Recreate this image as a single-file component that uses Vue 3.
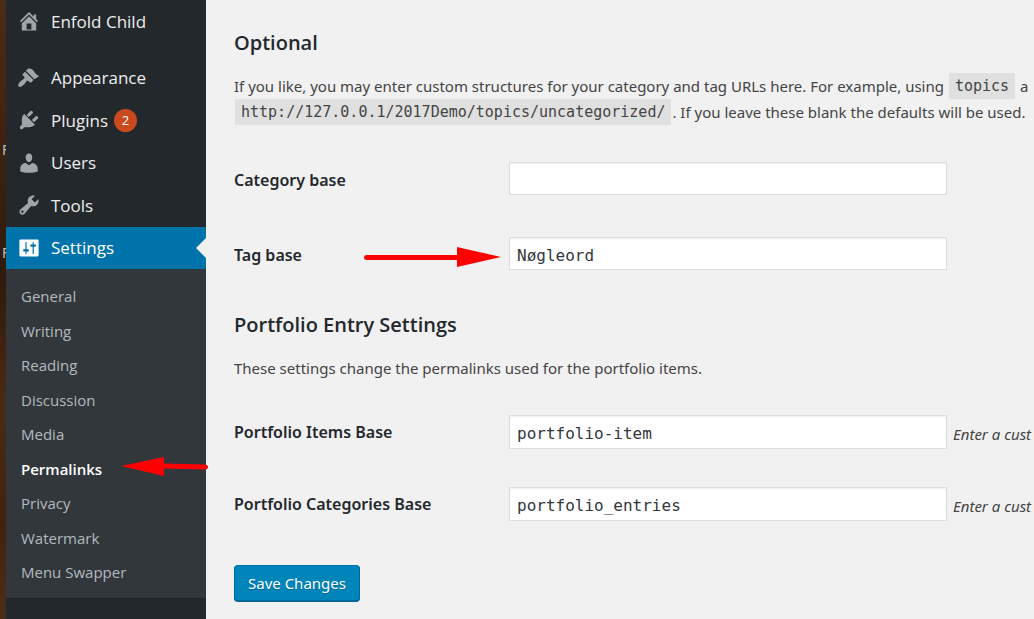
<script setup>
import { reactive } from 'vue'

const menu = [
  {
    label: 'Enfold Child',
    icon: 'M16 8.5l1.53 1.53-1.06 1.06L10 4.6l-6.47 6.47-1.06-1.06L10 2.5l4 4v-2h2v4zm-6-2.46l6 5.99V18H4v-5.97zM12 17v-5H8v5h4z',
  },
  {
    label: 'Appearance',
    spaced: true,
    icon: 'M14.48 11.06L7.41 3.99l1.5-1.5c.5-.56 2.3-.47 3.51.32 1.21.8 1.43 1.28 2 2.1.61.88 1.4 2.16 4.05 3.32l-.99.99zm-.71.71L6.7 4.7 4.93 6.47c-.39.39-.39 1.02 0 1.41l1.06 1.06c.39.39.39 1.03 0 1.42-.6.6-1.43 1.11-2.21 1.69-.35.26-.7.53-1.01.84C1.43 14.23.4 16.08 1.4 17.07c.99 1 2.84-.03 4.18-1.36.31-.31.58-.66.85-1.02.57-.78 1.08-1.61 1.69-2.21.39-.39 1.02-.39 1.41 0l1.06 1.06c.39.39 1.02.39 1.41 0z',
  },
  {
    label: 'Plugins',
    badge: 2,
    icon: 'M13.11 4.36L9.87 7.6 8 5.73l3.24-3.24c.35-.34 1.05-.2 1.56.32.52.51.66 1.21.31 1.55zm-8 1.77l.91-1.12 9.01 9.01-1.19.84c-.71.71-2.63 1.16-3.82 1.16H6.14L4.9 17.26c-.59.59-1.54.59-2.12 0-.59-.58-.59-1.53 0-2.12l1.24-1.24v-3.88c0-1.13.4-3.19 1.09-3.89zm7.26 3.97l3.24-3.24c.34-.35 1.04-.21 1.55.31.52.51.66 1.21.31 1.55l-3.24 3.25z',
  },
  {
    label: 'Users',
    icon: 'M10 9.25c-2.27 0-2.73-3.44-2.73-3.44C7 4.02 7.82 2 9.97 2c2.16 0 2.98 2.02 2.71 3.81 0 0-.41 3.44-2.68 3.44zm0 2.57L12.72 10c2.39 0 4.52 2.33 4.52 4.53v2.49s-3.65 1.13-7.24 1.13c-3.65 0-7.24-1.13-7.24-1.13v-2.49c0-2.25 1.94-4.48 4.47-4.48z',
  },
  {
    label: 'Tools',
    icon: 'M16.68 9.77c-1.34 1.34-3.3 1.67-4.95.99l-5.41 6.52c-.99.99-2.59.99-3.58 0s-.99-2.59 0-3.57l6.52-5.42c-.68-1.65-.35-3.61.99-4.95 1.28-1.28 3.12-1.62 4.72-1.06l-2.89 2.89 2.82 2.82 2.86-2.87c.53 1.58.18 3.39-1.08 4.65zM3.81 16.21c.4.39 1.04.39 1.43 0 .4-.4.4-1.04 0-1.43-.39-.4-1.03-.4-1.43 0-.39.39-.39 1.03 0 1.43z',
  },
  {
    label: 'Settings',
    current: true,
    icon: 'M18 16V4c0-.55-.45-1-1-1H3c-.55 0-1 .45-1 1v12c0 .55.45 1 1 1h14c.55 0 1-.45 1-1zM8 11h1c.55 0 1 .45 1 1s-.45 1-1 1H8v1.5c0 .28-.22.5-.5.5s-.5-.22-.5-.5V13H6c-.55 0-1-.45-1-1s.45-1 1-1h1V5.5c0-.28.22-.5.5-.5s.5.22.5.5V11zm5-2h-1c-.55 0-1-.45-1-1s.45-1 1-1h1V5.5c0-.28.22-.5.5-.5s.5.22.5.5V7h1c.55 0 1 .45 1 1s-.45 1-1 1h-1v5.5c0 .28-.22.5-.5.5s-.5-.22-.5-.5V9z',
  },
]

const submenu = ['General', 'Writing', 'Reading', 'Discussion', 'Media', 'Permalinks', 'Privacy', 'Watermark', 'Menu Swapper']

const form = reactive({
  category: '',
  tag: 'Nøgleord',
  items: 'portfolio-item',
  entries: 'portfolio_entries',
})
</script>

<template>
  <div class="page">
    <div class="desktop" aria-hidden="true">
      <span class="shortcut">F</span>
      <span class="shortcut">F</span>
    </div>

    <nav class="sidebar">
      <ul class="menu">
        <li v-for="item in menu" :key="item.label" :class="{ spaced: item.spaced }">
          <a href="#" class="menu-link" :class="{ current: item.current }">
            <svg class="icon" viewBox="0 0 20 20" aria-hidden="true"><path :d="item.icon" /></svg>
            <span>{{ item.label }}</span>
            <span v-if="item.badge" class="badge">{{ item.badge }}</span>
          </a>
        </li>
      </ul>
      <ul class="submenu">
        <li v-for="name in submenu" :key="name">
          <a href="#" class="sub-link" :class="{ active: name === 'Permalinks' }">{{ name }}</a>
        </li>
      </ul>
      <svg class="arrow arrow-left" viewBox="0 0 88 20" aria-hidden="true">
        <path d="M0 9L43 0V6.500L84 7.500Q87 8 87 10T84 12.500L43 11.500V19Z" />
      </svg>
    </nav>

    <main class="content">
      <form @submit.prevent>
        <h2>Optional</h2>
        <p class="intro">
          If you like, you may enter custom structures for your category and tag URLs here. For example, using <code>topics</code> a<br>
          <code>http://127.0.0.1/2017Demo/topics/uncategorized/</code>. If you leave these blank the defaults will be used.
        </p>

        <div class="fields optional">
          <div class="row">
            <label for="category">Category base</label>
            <input id="category" v-model="form.category" type="text">
          </div>
          <div class="row">
            <label for="tag">Tag base</label>
            <input id="tag" v-model="form.tag" type="text">
            <svg class="arrow arrow-right" viewBox="0 0 138 20" aria-hidden="true">
              <path d="M3 8H93V0L137 10L93 20V13H3Q0 13 0 10.500T3 8Z" />
            </svg>
          </div>
        </div>

        <h2>Portfolio Entry Settings</h2>
        <p class="note">These settings change the permalinks used for the portfolio items.</p>

        <div class="fields portfolio">
          <div class="row">
            <label for="items">Portfolio Items Base</label>
            <input id="items" v-model="form.items" type="text">
            <em>Enter a cust</em>
          </div>
          <div class="row">
            <label for="entries">Portfolio Categories Base</label>
            <input id="entries" v-model="form.entries" type="text">
            <em>Enter a cust</em>
          </div>
        </div>

        <button type="submit">Save Changes</button>
      </form>
    </main>
  </div>
</template>

<style>
body {
  margin: 0;
  background: #f1f1f1;
}
</style>

<style scoped>
.page {
  display: flex;
  min-height: 100vh;
  overflow: hidden;
  font-family: "Noto Sans", "Open Sans", sans-serif;
  font-size: 15px;
  color: #444;
}

.desktop {
  flex: 0 0 6px;
  width: 6px;
  overflow: hidden;
  padding-top: 140px;
  box-sizing: border-box;
  background: linear-gradient(#4a2d14, #3c220f 25%, #301a0d 45%, #4a2b12 65%, #3f230e 85%, #4b2e14);
}

.shortcut {
  display: block;
  height: 103px;
  padding-left: 2px;
  font-size: 14px;
  line-height: 20px;
  color: #c4bfba;
}

.sidebar {
  position: relative;
  flex: 0 0 200px;
  background: #23282d;
  font-family: "Open Sans", "Noto Sans", sans-serif;
}

ul {
  margin: 0;
  padding: 0;
  list-style: none;
}

.menu {
  display: flex;
  flex-direction: column;
  height: 269px;
}

.menu li {
  flex: 1;
}

.menu .spaced {
  margin-top: 14px;
}

.menu-link {
  position: relative;
  display: flex;
  align-items: center;
  height: 100%;
  padding-left: 11px;
  font-size: 17px;
  color: #eee;
  text-decoration: none;
}

.icon {
  width: 24px;
  height: 24px;
  margin-right: 10px;
  fill: #a0a5aa;
}

.current {
  background: #0073aa;
  color: #fff;
}

.current .icon {
  fill: #fff;
}

.current::after {
  content: "";
  position: absolute;
  top: 11px;
  right: 0;
  border: 10px solid transparent;
  border-left: 0;
  border-right-color: #f1f1f1;
}

.badge {
  width: 23px;
  margin-left: 6px;
  border-radius: 50%;
  background: #ca4a1f;
  color: #fff;
  font-size: 13px;
  line-height: 23px;
  text-align: center;
}

.submenu {
  display: grid;
  grid-auto-rows: 1fr;
  height: 311px;
  padding: 10px 0 8px;
  background: #32373c;
}

.sub-link {
  display: block;
  padding-left: 15px;
  font-size: 15px;
  line-height: 34px;
  color: #b4b9be;
  text-decoration: none;
}

.active {
  color: #fff;
  font-weight: 600;
}

.arrow {
  position: absolute;
  fill: #f00;
}

.arrow-left {
  top: 457px;
  left: 115px;
  width: 88px;
  height: 20px;
}

.arrow-right {
  top: 10px;
  left: 130px;
  width: 138px;
  height: 20px;
}

.content {
  flex: 1;
  min-width: 0;
  padding: 29px 0 17px 28px;
}

h2 {
  margin: 0;
  font-family: "Open Sans", "Noto Sans", sans-serif;
  font-size: 20px;
  font-weight: 600;
  line-height: 28px;
  color: #23282d;
}

p {
  margin: 16px 0 0;
  line-height: 26px;
  white-space: nowrap;
}

code {
  display: inline-block;
  margin: 0 1px;
  padding: 1px 6px 0;
  background: #e0e0e0;
  font-family: "DejaVu Sans Mono", "Liberation Mono", monospace;
  font-size: 15px;
  line-height: 25px;
  vertical-align: top;
}

.fields {
  display: grid;
}

.optional {
  gap: 42px;
  margin: 37px 0 41px;
}

.portfolio {
  gap: 38px;
  margin: 34px 0 44px;
}

.row {
  position: relative;
  display: grid;
  grid-template-columns: 275px minmax(200px, 438px) 82px;
  align-items: center;
  white-space: nowrap;
}

label {
  padding-top: 3px;
  font-size: 16px;
  font-weight: 600;
  color: #23282d;
}

input {
  box-sizing: border-box;
  width: 100%;
  height: 33px;
  padding: 4px 7px 1px;
  border: 1px solid #ddd;
  background: #fff;
  box-shadow: inset 0 1px 2px rgba(0, 0, 0, 0.07);
  color: #32373c;
  font-family: "DejaVu Sans Mono", "Liberation Mono", monospace;
  font-size: 16px;
}

.portfolio input {
  height: 34px;
}

em {
  padding: 3px 0 0 6px;
}

.portfolio label {
  padding-top: 0;
}

button {
  height: 36px;
  padding: 0 13px;
  border: 1px solid #006799;
  border-top-color: #0073aa;
  border-radius: 4px;
  background: #0085ba;
  box-shadow: 0 1px 0 #006799;
  color: #fff;
  font-family: inherit;
  font-size: 15px;
  text-shadow: 0 1px 1px #006799;
}
</style>
